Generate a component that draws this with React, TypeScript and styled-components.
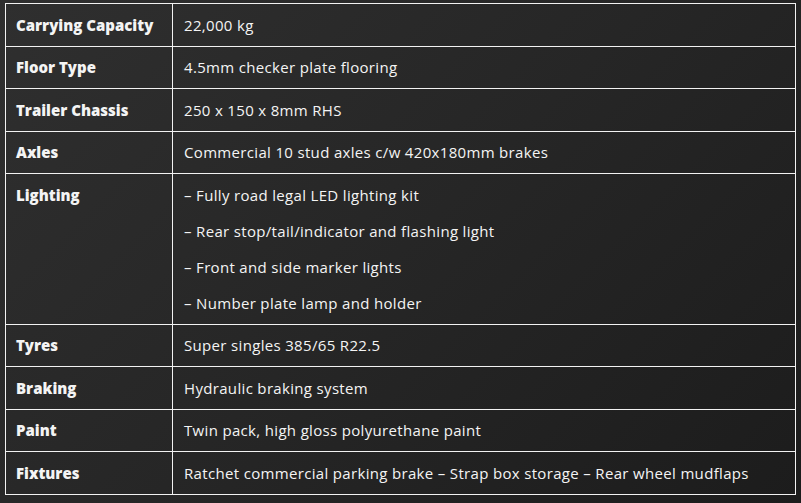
import React from "react";
import styled, { createGlobalStyle } from "styled-components";

const GlobalStyle = createGlobalStyle`
  html, body { margin: 0; padding: 0; }
  body {
    width: 801px;
    height: 503px;
    overflow: hidden;
    background: linear-gradient(135deg, #2f2f2f 0%, #262626 50%, #1c1c1c 100%);
    font-family: "Open Sans", "Noto Sans", sans-serif;
    -webkit-font-smoothing: antialiased;
  }
`;

const Page = styled.div`
  padding: 3px 5px 0 5px;
`;

const SpecTable = styled.table`
  width: 791px;
  border-collapse: collapse;
  color: #f4f4f4;
  font-size: 15px;
  line-height: 22.5px;
`;

const Label = styled.th`
  width: 146px;
  border: 1px solid #f2f2f2;
  padding: 9.5px 10px;
  text-align: left;
  vertical-align: top;
  font-weight: 800;
  letter-spacing: 0px;
  white-space: nowrap;
`;

const Value = styled.td`
  border: 1px solid #f2f2f2;
  padding: 9.5px 11px;
  vertical-align: top;
  font-weight: 400;
  letter-spacing: 0.33px;
  white-space: nowrap;
`;

const Line = styled.p`
  margin: 0;
  & + & { margin-top: 13.5px; }
`;

const rows: { label: string; value: string[] }[] = [
  { label: "Carrying Capacity", value: ["22,000 kg"] },
  { label: "Floor Type", value: ["4.5mm checker plate flooring"] },
  { label: "Trailer Chassis", value: ["250 x 150 x 8mm RHS"] },
  { label: "Axles", value: ["Commercial 10 stud axles c/w 420x180mm brakes"] },
  {
    label: "Lighting",
    value: [
      "– Fully road legal LED lighting kit",
      "– Rear stop/tail/indicator and flashing light",
      "– Front and side marker lights",
      "– Number plate lamp and holder",
    ],
  },
  { label: "Tyres", value: ["Super singles 385/65 R22.5"] },
  { label: "Braking", value: ["Hydraulic braking system"] },
  { label: "Paint", value: ["Twin pack, high gloss polyurethane paint"] },
  {
    label: "Fixtures",
    value: ["Ratchet commercial parking brake – Strap box storage – Rear wheel mudflaps"],
  },
];

export default function App() {
  return (
    <>
      <GlobalStyle />
      <Page>
        <SpecTable>
          <tbody>
            {rows.map((r) => (
              <tr key={r.label}>
                <Label scope="row">{r.label}</Label>
                <Value>
                  {r.value.map((v) => (
                    <Line key={v}>{v}</Line>
                  ))}
                </Value>
              </tr>
            ))}
          </tbody>
        </SpecTable>
      </Page>
    </>
  );
}
